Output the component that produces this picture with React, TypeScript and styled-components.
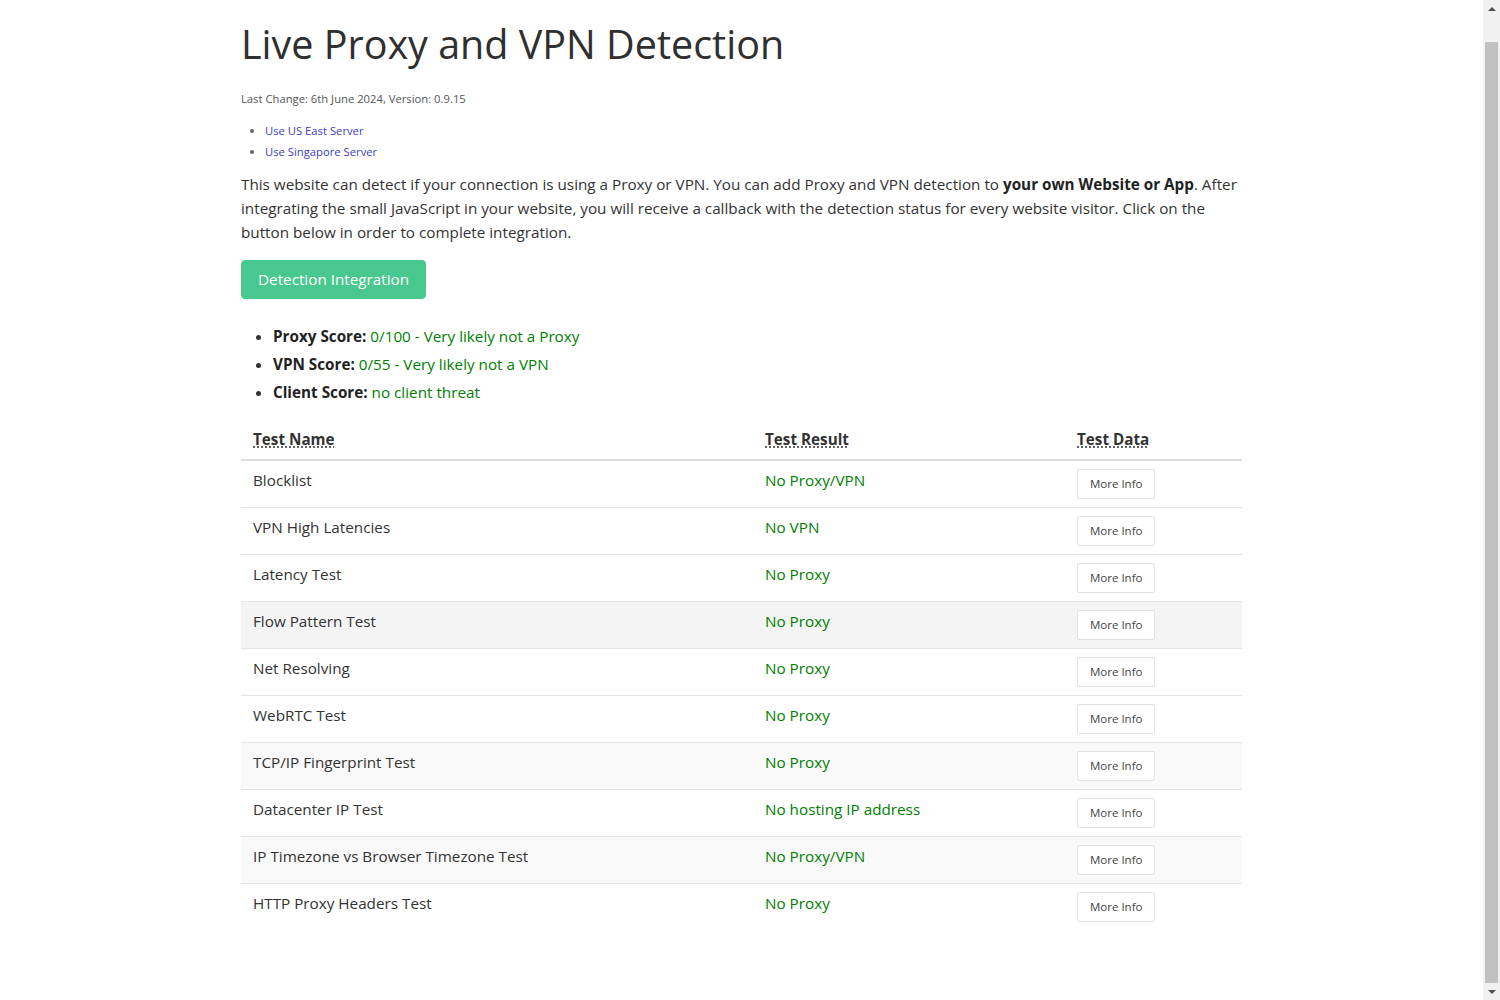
import React, { useLayoutEffect } from "react";
import styled, { createGlobalStyle } from "styled-components";

const GlobalStyle = createGlobalStyle`
  html { overflow-y: scroll; scrollbar-width: none; }
  body {
    margin: 0;
    background: #fff;
    color: #333;
    font-family: "Open Sans", "Noto Sans", sans-serif;
    font-size: 15.25px;
  }
`;

const Page = styled.div`
  min-height: 1027px;
  box-sizing: border-box;
  padding: 47px 17px 0 0;
`;

const Container = styled.main`
  width: 1001px;
  margin: 0 auto;
`;

const Title = styled.h1`
  margin: 0;
  font-size: 39.5px;
  line-height: 48px;
  font-weight: 500;
  color: #2f2f2f;
`;

const Meta = styled.p`
  margin: 22px 0 0;
  font-size: 11.25px;
  line-height: 18px;
  color: #555;
`;

const LinkList = styled.ul`
  margin: 12px 0 0;
  padding-left: 24px;
  font-size: 11.25px;
  line-height: 21px;
  color: #666;
`;

const ServerLink = styled.a`
  color: #3c3cc0;
  text-decoration: none;
`;

const Intro = styled.p`
  margin: 10px 0 0;
  font-size: 15.25px;
  line-height: 24px;
  color: #333;
`;

const PrimaryButton = styled.button`
  display: inline-block;
  margin-top: 16px;
  padding: 7px 16px;
  border: 1px solid #48c78e;
  border-radius: 4px;
  background: #48c78e;
  color: #fff;
  font-family: inherit;
  font-size: 15.25px;
  line-height: 23px;
  cursor: pointer;
`;

const ScoreList = styled.ul`
  margin: 23px 0 0;
  padding-left: 32px;
  font-size: 15.25px;
  line-height: 28px;
`;

const Label = styled.strong`
  font-weight: 700;
  color: #222;
`;

const Good = styled.span`
  color: #008000;
`;

const Table = styled.table`
  margin-top: 13px;
  width: 100%;
  border-collapse: collapse;
  font-size: 15.25px;
`;

const Th = styled.th<{ $w?: number }>`
  text-align: left;
  padding: 8px 12px;
  line-height: 24px;
  border-bottom: 2px solid #dedede;
  ${(p) => (p.$w ? `width: ${p.$w}px;` : "")}
  box-sizing: border-box;
`;

const Abbr = styled.abbr`
  font-weight: 700;
  text-decoration: underline dotted;
  text-underline-offset: 2px;
  cursor: help;
`;

const Row = styled.tr<{ $shade?: string }>`
  background: ${(p) => p.$shade || "#fff"};
  border-top: 1px solid #e4e4e4;
`;

const Td = styled.td<{ $ok?: boolean }>`
  padding: 8px 12px;
  line-height: 22px;
  vertical-align: top;
  color: ${(p) => (p.$ok ? "#008000" : "#333")};
`;

const InfoButton = styled.button`
  display: inline-block;
  box-sizing: border-box;
  height: 30px;
  padding: 5px 12px;
  border: 1px solid #e2e2e2;
  border-radius: 2px;
  background: #fff;
  color: #444;
  font-family: inherit;
  font-size: 11.5px;
  line-height: 18px;
  cursor: pointer;
`;

/* Emulated browser scrollbar, overlaid at the right edge */
const ScrollTrack = styled.div`
  position: fixed;
  top: 0;
  right: 0;
  width: 17px;
  height: 100vh;
  background: #f1f1f1;
  display: flex;
  flex-direction: column;
`;

const ScrollArrow = styled.div<{ $down?: boolean }>`
  height: 17px;
  flex: none;
  display: flex;
  align-items: center;
  justify-content: center;
  &::before {
    content: "";
    width: 0;
    height: 0;
    border-left: 4px solid transparent;
    border-right: 4px solid transparent;
    ${(p) =>
      p.$down ? "border-top: 4px solid #505050;" : "border-bottom: 4px solid #505050;"}
  }
`;

const ScrollArea = styled.div`
  flex: 1;
  display: flex;
  flex-direction: column;
  justify-content: flex-end;
  padding: 0 2px;
`;

const ScrollThumb = styled.div`
  height: 941px;
  background: #c1c1c1;
`;

const rows: { name: string; result: string; shade?: string }[] = [
  { name: "Blocklist", result: "No Proxy/VPN" },
  { name: "VPN High Latencies", result: "No VPN" },
  { name: "Latency Test", result: "No Proxy" },
  { name: "Flow Pattern Test", result: "No Proxy", shade: "#f4f4f4" },
  { name: "Net Resolving", result: "No Proxy" },
  { name: "WebRTC Test", result: "No Proxy" },
  { name: "TCP/IP Fingerprint Test", result: "No Proxy", shade: "#f9f9f9" },
  { name: "Datacenter IP Test", result: "No hosting IP address" },
  { name: "IP Timezone vs Browser Timezone Test", result: "No Proxy/VPN", shade: "#f9f9f9" },
  { name: "HTTP Proxy Headers Test", result: "No Proxy" },
];

export default function App() {
  useLayoutEffect(() => {
    window.scrollTo(0, document.documentElement.scrollHeight);
  }, []);

  return (
    <>
      <GlobalStyle />
      <Page>
        <Container>
          <Title>Live Proxy and VPN Detection</Title>
          <Meta>Last Change: 6th June 2024, Version: 0.9.15</Meta>
          <LinkList>
            <li>
              <ServerLink href="#">Use US East Server</ServerLink>
            </li>
            <li>
              <ServerLink href="#">Use Singapore Server</ServerLink>
            </li>
          </LinkList>
          <Intro>
            This website can detect if your connection is using a Proxy or VPN. You can add Proxy and VPN
            detection to <Label>your own Website or App</Label>. After integrating the small JavaScript in your
            website, you will receive a callback with the detection status for every website visitor. Click on
            the button below in order to complete integration.
          </Intro>
          <PrimaryButton>Detection Integration</PrimaryButton>
          <ScoreList>
            <li>
              <Label>Proxy Score:</Label> <Good>0/100 - Very likely not a Proxy</Good>
            </li>
            <li>
              <Label>VPN Score:</Label> <Good>0/55 - Very likely not a VPN</Good>
            </li>
            <li>
              <Label>Client Score:</Label> <Good>no client threat</Good>
            </li>
          </ScoreList>
          <Table>
            <thead>
              <tr>
                <Th $w={512}>
                  <Abbr title="Test Name">Test Name</Abbr>
                </Th>
                <Th $w={312}>
                  <Abbr title="Test Result">Test Result</Abbr>
                </Th>
                <Th>
                  <Abbr title="Test Data">Test Data</Abbr>
                </Th>
              </tr>
            </thead>
            <tbody>
              {rows.map((r) => (
                <Row key={r.name} $shade={r.shade}>
                  <Td>{r.name}</Td>
                  <Td $ok>{r.result}</Td>
                  <Td>
                    <InfoButton>More Info</InfoButton>
                  </Td>
                </Row>
              ))}
            </tbody>
          </Table>
        </Container>
      </Page>
      <ScrollTrack aria-hidden="true">
        <ScrollArrow />
        <ScrollArea>
          <ScrollThumb />
        </ScrollArea>
        <ScrollArrow $down />
      </ScrollTrack>
    </>
  );
}
